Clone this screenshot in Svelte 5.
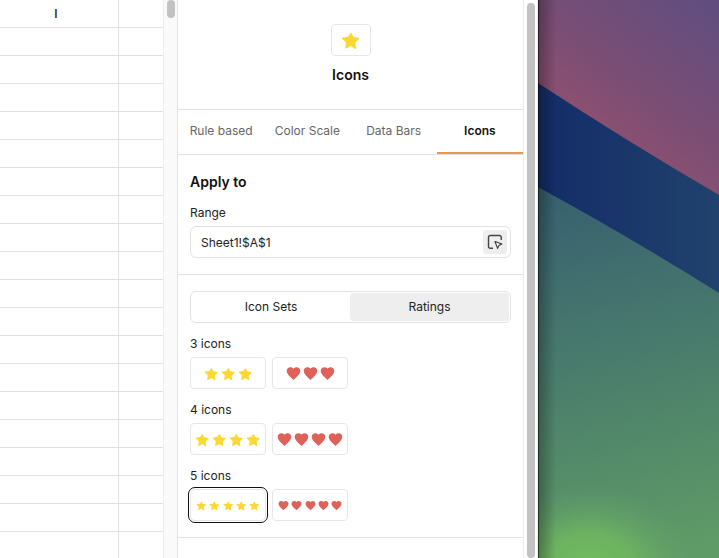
<script>
	const rows = Array(19);
	const tabs = ["Rule based", "Color Scale", "Data Bars", "Icons"];
	const star = "M12 2.600l2.900 5.900 6.400.9c.7.1 1 1 .5 1.500l-4.700 4.500 1.100 6.400c.1.7-.6 1.200-1.200.9L12 19.200l-5.800 3c-.6.3-1.300-.2-1.200-.9l1.100-6.400-4.700-4.500c-.5-.5-.2-1.400.5-1.500l6.400-.9z";
	const heart = "M12 21.350l-1.450-1.320C5.400 15.360 2 12.280 2 8.500 2 5.420 4.420 3 7.500 3c1.740 0 3.410.81 4.500 2.090C13.090 3.810 14.760 3 16.500 3 19.580 3 22 5.420 22 8.500c0 3.780-3.400 6.860-8.550 11.540L12 21.350z";
	const groups = [
		{ label: "3 icons", count: 3, size: 15, gap: 2 },
		{ label: "4 icons", count: 4, size: 15, gap: 1.700 },
		{ label: "5 icons", count: 5, size: 11, gap: 2.300 }
	];
</script>

<div class="page">
	<div class="sheet">
		<div class="grid">
			<div class="row head">
				<div class="cell">I</div>
				<div class="cell narrow"></div>
			</div>
			{#each rows as _}
				<div class="row">
					<div class="cell"></div>
					<div class="cell narrow"></div>
				</div>
			{/each}
		</div>
		<div class="track"><div class="thumb"></div></div>
	</div>

	<div class="panel">
		<div class="title">
			<div class="title-icon">
				<svg width="20" height="20" viewBox="0 0 24 24"><path d={star} fill="#fdd835" /></svg>
			</div>
			<div class="title-text">Icons</div>
		</div>

		<div class="tabs">
			{#each tabs as tab}
				<div class="tab" class:active={tab === "Icons"}>{tab}</div>
			{/each}
		</div>

		<div class="section">
			<div class="heading">Apply to</div>
			<div class="label">Range</div>
			<div class="input">
				<span>Sheet1!$A$1</span>
				<div class="picker">
					<svg width="16" height="16" viewBox="0 0 16 16" fill="none">
						<path d="M6 14.200H3.200a1.700 1.700 0 0 1-1.700-1.700V3.200a1.700 1.700 0 0 1 1.700-1.700h9.300a1.700 1.700 0 0 1 1.700 1.700V6" stroke="#444" stroke-width="1.400" />
						<path d="M8 7.500l6.800 2.600-2.900 1.300-1.300 3z" fill="#fff" stroke="#333" stroke-width="1.100" stroke-linejoin="round" />
					</svg>
				</div>
			</div>
		</div>

		<div class="section sets">
			<div class="segment">
				<div class="seg first">Icon Sets</div>
				<div class="seg on">Ratings</div>
			</div>

			{#each groups as group, g}
				<div class="label group-label">{group.label}</div>
				<div class="choices">
					{#each [star, heart] as shape, s}
						<div class="choice" class:picked={g === 2 && s === 0} style="gap: {group.gap}px">
							{#each Array(group.count) as _}
								<svg width={group.size} height={group.size} viewBox={s === 0 ? "0 0 24 24" : "1 1 22 22"}>
									<path d={shape} fill={s === 0 ? "#fdd835" : "#de6259"} />
								</svg>
							{/each}
						</div>
					{/each}
				</div>
			{/each}
		</div>
	</div>

	<div class="track right"><div class="thumb long"></div></div>

	<div class="wallpaper">
		<svg width="181" height="558" viewBox="0 0 181 558" preserveAspectRatio="none">
			<defs>
				<linearGradient id="top" gradientUnits="userSpaceOnUse" x1="181" y1="0" x2="60" y2="165">
					<stop offset="0" stop-color="#5e4e80" />
					<stop offset="0.580" stop-color="#7a4e74" />
					<stop offset="0.850" stop-color="#8b5071" />
				</linearGradient>
				<linearGradient id="band" x1="0" y1="0" x2="1" y2="0">
					<stop offset="0" stop-color="#142c68" />
					<stop offset="1" stop-color="#20426c" />
				</linearGradient>
				<linearGradient id="green" gradientUnits="userSpaceOnUse" x1="30" y1="190" x2="110" y2="558">
					<stop offset="0" stop-color="#38606f" />
					<stop offset="0.400" stop-color="#47786d" />
					<stop offset="1" stop-color="#5f9b67" />
				</linearGradient>
				<radialGradient id="glow">
					<stop offset="0" stop-color="#74bf60" />
					<stop offset="0.450" stop-color="#6fb660" stop-opacity="0.850" />
					<stop offset="1" stop-color="#5f9b67" stop-opacity="0" />
				</radialGradient>
				<linearGradient id="edge">
					<stop offset="0" stop-color="#000" stop-opacity="0.300" />
					<stop offset="1" stop-color="#000" stop-opacity="0" />
				</linearGradient>
			</defs>
			<rect width="181" height="558" fill="url(#top)" />
			<path d="M0 83 Q90 142 181 195 V558 H0 Z" fill="url(#band)" />
			<path d="M0 187 Q90 236 181 293 V558 H0 Z" fill="url(#green)" />
			<ellipse cx="50" cy="572" rx="110" ry="88" fill="url(#glow)" />
			<rect width="18" height="558" fill="url(#edge)" />
			<rect width="1" height="558" fill="#000" opacity="0.500" />
		</svg>
	</div>
</div>

<style>
	:global(body) {
		margin: 0;
		background: #fff;
	}

	.page {
		display: flex;
		width: 719px;
		height: 558px;
		overflow: hidden;
		font-family: Inter, "Liberation Sans", sans-serif;
		color: #1a1a1a;
		font-size: 12px;
	}

	.sheet {
		display: flex;
		flex: none;
		width: 178px;
		border-right: 1px solid #e2e2e2;
		box-sizing: border-box;
	}

	.grid {
		width: 163px;
		flex: none;
		overflow: hidden;
	}

	.row {
		display: flex;
		height: 28px;
		box-sizing: border-box;
		border-bottom: 1px solid #e0e0e0;
	}

	.cell {
		width: 119px;
		flex: none;
		box-sizing: border-box;
		border-right: 1px solid #e0e0e0;
		padding-right: 6px;
		text-align: center;
		line-height: 27px;
		font-size: 12px;
		font-weight: 600;
		color: #333;
	}

	.narrow {
		width: 44px;
		border-right: none;
	}

	.track {
		width: 14px;
		flex: none;
		background: #fafafa;
		border-left: 1px solid #ececec;
		box-sizing: border-box;
		display: flex;
		justify-content: center;
	}

	.thumb {
		width: 8px;
		height: 18px;
		background: #c2c2c2;
		border-radius: 4px;
	}

	.track.right {
		width: 15px;
		background: #fff;
		border-right: 1px solid #eee;
		padding-top: 3px;
	}

	.thumb.long {
		height: 555px;
	}

	.panel {
		width: 345px;
		flex: none;
		display: flex;
		flex-direction: column;
	}

	.title {
		height: 110px;
		display: flex;
		flex-direction: column;
		align-items: center;
		padding-top: 24px;
		box-sizing: border-box;
		border-bottom: 1px solid #e2e2e2;
	}

	.title-icon {
		width: 40px;
		height: 32px;
		box-sizing: border-box;
		border: 1px solid #e6e6e6;
		border-radius: 4px;
		display: flex;
		align-items: center;
		justify-content: center;
	}

	.title-text {
		margin-top: 10px;
		font-size: 14px;
		font-weight: 600;
		line-height: 17px;
		color: #111;
	}

	.tabs {
		display: grid;
		grid-template-columns: repeat(4, 1fr);
		height: 45px;
		box-sizing: border-box;
		border-bottom: 1px solid #e2e2e2;
	}

	.tab {
		text-align: center;
		line-height: 42px;
		color: #666;
		white-space: nowrap;
		height: 44px;
		box-sizing: border-box;
	}

	.tab.active {
		color: #111;
		font-weight: 600;
		border-bottom: 2px solid #e39a4a;
	}

	.section {
		padding: 0 12px;
		height: 120px;
		box-sizing: border-box;
		border-bottom: 1px solid #e2e2e2;
		display: flex;
		flex-direction: column;
	}

	.heading {
		font-size: 14px;
		font-weight: 600;
		line-height: 17px;
		margin-top: 18px;
		color: #111;
	}

	.label {
		line-height: 15px;
		margin-top: 15px;
		color: #222;
	}

	.input {
		margin-top: 6px;
		height: 32px;
		box-sizing: border-box;
		border: 1px solid #e2e2e2;
		border-radius: 6px;
		display: flex;
		align-items: center;
		justify-content: space-between;
		padding: 0 3px 0 10px;
		color: #222;
	}

	.picker {
		width: 24px;
		height: 24px;
		background: #eee;
		border-radius: 3px;
		display: flex;
		align-items: center;
		justify-content: center;
	}

	.sets {
		height: 263px;
		padding-top: 16px;
	}

	.segment {
		display: flex;
		height: 32px;
		box-sizing: border-box;
		border: 1px solid #e2e2e2;
		border-radius: 6px;
		padding: 1px;
	}

	.seg {
		flex: 1;
		text-align: center;
		line-height: 28px;
		color: #222;
		border-radius: 4px;
	}

	.seg.first {
		flex: none;
		width: 158px;
	}

	.seg.on {
		background: #eee;
	}

	.group-label {
		margin-top: 13px;
		margin-bottom: 6px;
	}

	.choices {
		display: flex;
		gap: 6px;
	}

	.choice {
		width: 76px;
		height: 32px;
		box-sizing: border-box;
		border: 1px solid #e6e6e6;
		border-radius: 4px;
		display: flex;
		align-items: center;
		justify-content: center;
	}

	.choice.picked {
		border-color: #e6e6e6;
		outline: 1.500px solid #111;
		outline-offset: 1px;
		border-radius: 5px;
	}

	.wallpaper {
		flex: none;
		width: 181px;
		height: 558px;
	}

	.wallpaper svg {
		display: block;
	}
</style>
